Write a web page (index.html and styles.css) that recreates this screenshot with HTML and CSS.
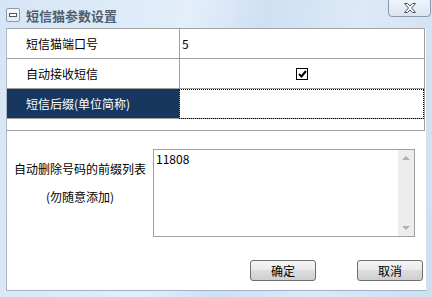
FILE: index.html
```html
<!DOCTYPE html>
<html lang="zh-CN">
<head>
    <meta charset="UTF-8">
    <title>短信猫参数设置</title>
    <link rel="stylesheet" href="styles.css">
</head>
<body>
    <div class="window">
        <div class="titlebar">
            <span class="sys-icon"><span class="dash"></span></span>
            <span class="title">短信猫参数设置</span>
            <button class="close" type="button" aria-label="关闭">
                <svg width="14" height="10" viewBox="0 0 14 10">
                    <path d="M1.5 0.5h3l2.5 2.5 2.5-2.5h3l-4 4.5 4 4.5h-3l-2.5-2.5-2.5 2.5h-3l4-4.5z" fill="#fff" stroke="#4b5563" stroke-width="1" stroke-linejoin="round"/>
                </svg>
            </button>
        </div>

        <div class="client">
            <div class="props">
                <div class="row">
                    <div class="key">短信猫端口号</div>
                    <div class="val">5</div>
                </div>
                <div class="row">
                    <div class="key">自动接收短信</div>
                    <div class="val center">
                        <span class="check">
                            <svg width="9" height="8" viewBox="0 0 9 8">
                                <path d="M1 4l2.5 2.5L8 1" fill="none" stroke="#000" stroke-width="2"/>
                            </svg>
                        </span>
                    </div>
                </div>
                <div class="row selected">
                    <div class="key">短信后缀(单位简称)</div>
                    <div class="val focus"></div>
                </div>
            </div>

            <div class="lower">
                <div class="caption">
                    <p>自动删除号码的前缀列表</p>
                    <p class="note">(勿随意添加)</p>
                </div>
                <div class="memo">
                    <div class="memo-text">11808</div>
                    <div class="vscroll">
                        <span class="arrow up"></span>
                        <span class="arrow down"></span>
                    </div>
                </div>
            </div>

            <div class="buttons">
                <button type="button" class="btn ok">确定</button>
                <button type="button" class="btn">取消</button>
            </div>
        </div>
    </div>
</body>
</html>
```

FILE: styles.css
```css
body {
    margin: 0;
    font-family: "Noto Sans CJK SC", "Liberation Sans", sans-serif;
    font-size: 12px;
    color: #000;
}

.window {
    width: 432px;
    height: 297px;
    box-sizing: border-box;
    padding: 0 6px 6px 6px;
    display: flex;
    flex-direction: column;
    background: linear-gradient(100deg, #d6e5f5 0%, #e3eefa 40%, #cfe0f3 55%, #dce9f7 75%, #cfdff1 100%);
}

.titlebar {
    height: 28px;
    display: flex;
    align-items: center;
    position: relative;
}

.sys-icon {
    width: 12px;
    height: 12px;
    border: 1px solid #8c98a6;
    border-radius: 2px;
    background: linear-gradient(#fafcff, #e4ebf3);
    display: flex;
    align-items: center;
    justify-content: center;
    margin-top: 2px;
}

.sys-icon .dash {
    width: 6px;
    height: 2px;
    border: 1px solid #4c5665;
    background: #fff;
}

.title {
    margin-left: 6px;
    font-size: 13px;
    font-weight: bold;
    color: #4f5d6f;
    margin-top: 2px;
}

.close {
    position: absolute;
    top: -1px;
    right: -5px;
    width: 43px;
    height: 18px;
    padding: 0;
    border: 1px solid #8898ad;
    border-radius: 0 0 4px 4px;
    background: linear-gradient(#eef4fb, #d9e5f2);
    display: flex;
    align-items: center;
    justify-content: center;
}

.client {
    flex: 1;
    background: #fff;
    border-bottom: 1px solid #9fb1c6;
    border-left: 1px solid #a9b9cb;
    display: flex;
    flex-direction: column;
}

.props {
    height: 101px;
    border: 1px solid #a0a0a0;
    border-left: none;
    margin-right: 1px;
}

.row {
    display: flex;
    height: 29px;
    border-bottom: 1px solid #a0a0a0;
}

.key {
    width: 173px;
    padding-left: 19px;
    box-sizing: border-box;
    display: flex;
    align-items: center;
    border-right: 1px solid #a0a0a0;
}

.val {
    flex: 1;
    display: flex;
    align-items: center;
    padding-left: 2px;
}

.val.center {
    justify-content: center;
    padding-left: 0;
}

.check {
    width: 10px;
    height: 10px;
    border: 1px solid #000;
    display: flex;
    align-items: center;
    justify-content: center;
}

.selected .key {
    background: #17375f;
    color: #fff;
}

.selected .val {
    border: 1px dotted #000;
    margin: 0 0 -1px -1px;
}

.lower {
    display: flex;
    padding-top: 18px;
}

.caption {
    width: 146px;
    text-align: center;
    padding-top: 12px;
}

.caption p {
    margin: 0;
    line-height: 16px;
}

.caption .note {
    margin-top: 12px;
}

.memo {
    width: 262px;
    height: 88px;
    box-sizing: border-box;
    border: 1px solid #a0a0a0;
    display: flex;
}

.memo-text {
    flex: 1;
    padding: 1px 2px;
    line-height: 16px;
}

.vscroll {
    width: 16px;
    background: #ededed;
    display: flex;
    flex-direction: column;
    justify-content: space-between;
    align-items: center;
    padding: 6px 0;
}

.arrow {
    width: 0;
    height: 0;
    border-left: 4px solid transparent;
    border-right: 4px solid transparent;
}

.arrow.up {
    border-bottom: 4px solid #b0b0b0;
}

.arrow.down {
    border-top: 4px solid #b0b0b0;
}

.buttons {
    display: flex;
    justify-content: flex-end;
    gap: 41px;
    padding: 23px 3px 0 0;
}

.btn {
    width: 66px;
    height: 21px;
    padding: 0;
    font-family: inherit;
    font-size: 12px;
    color: #000;
    border: 1px solid #707070;
    border-radius: 3px;
    background: linear-gradient(#f4f4f4 0%, #ebebeb 45%, #dddddd 50%, #cfcfcf 100%);
}
```
